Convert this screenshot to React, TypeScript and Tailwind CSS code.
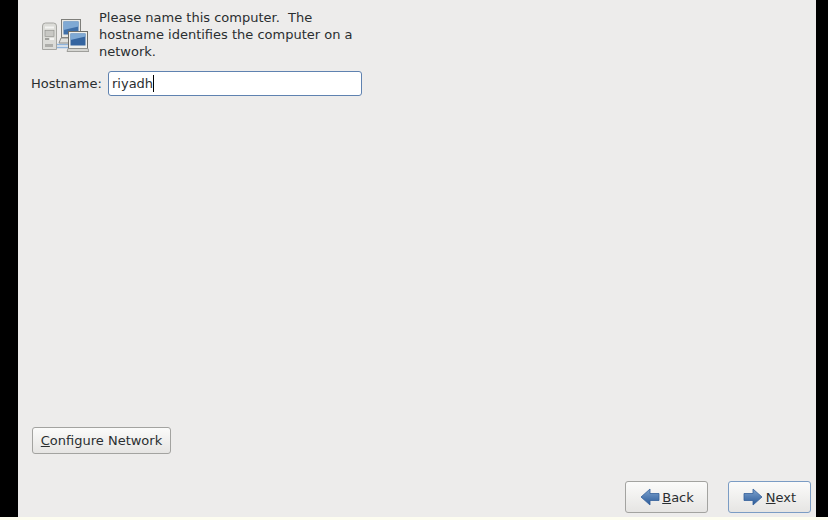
const ui = { fontFamily: '"DejaVu Sans", sans-serif' };

function NetworkIcon() {
  return (
    <svg width="48" height="36" viewBox="0 0 48 36">
      {/* tower */}
      <path d="M1.500 10q0-3 3-3h8q3 0 3 3v23.500h-14z" fill="#dcdcd8" stroke="#a6a6a2" />
      <rect x="4" y="10.500" width="9" height="2" fill="#f4f4f2" />
      <rect x="4" y="14.500" width="9" height="6" fill="#c8c8c4" stroke="#8e8e8a" strokeWidth="0.6" />
      <rect x="4" y="22" width="4" height="2" fill="#a0a09c" />
      <rect x="9" y="22" width="4" height="2" fill="#f4f4f2" />
      <path d="M5 28v3M7 28v3M9 28v3M11 28v3" stroke="#80807c" />
      {/* cables */}
      <path d="M16 28.500h13M16 31.500h13" stroke="#8fb4dc" strokeWidth="1.300" />
      {/* back monitor */}
      <rect x="20.500" y="3.500" width="19" height="18" fill="#e9e9e5" stroke="#7e7e7a" />
      <rect x="22.500" y="5.500" width="15" height="13" fill="#3f6fa8" />
      <path d="M22.500 5.500h15v5l-15 3.500z" fill="#7fa9d4" />
      <path d="M18 27l2-5h9v5z" fill="#e0e0dc" stroke="#8e8e8a" />
      {/* front monitor */}
      <rect x="27.500" y="15.500" width="19" height="17" fill="#f0f0ec" stroke="#6e6e6a" />
      <rect x="29.500" y="17.500" width="15" height="12" fill="#3565a0" />
      <path d="M29.500 17.500h15v3l-15 3.500z" fill="#7fa9d4" />
      <path d="M27 32.500h20l1 3H26z" fill="#d6d6d2" stroke="#8e8e8a" strokeWidth="0.8" />
    </svg>
  );
}

function ArrowIcon({ flip }: { flip?: boolean }) {
  const id = flip ? "arrow-b" : "arrow-n";
  return (
    <svg width="20" height="18" viewBox="0 0 20 18" className={flip ? "-scale-x-100" : ""}>
      <defs>
        <linearGradient id={id} x1="0" y1="0" x2="0" y2="1">
          <stop offset="0" stopColor="#7ea3cf" />
          <stop offset="1" stopColor="#2a5a98" />
        </linearGradient>
      </defs>
      <path
        d="M1 5.500h9V1l9 8-9 8v-4.500H1z"
        fill={`url(#${id})`}
        stroke="#34609a"
        strokeWidth="0.8"
        strokeLinejoin="round"
      />
    </svg>
  );
}

function Button({
  focused,
  className,
  children,
}: {
  focused?: boolean;
  className: string;
  children: React.ReactNode;
}) {
  return (
    <button
      className={`flex items-center justify-center rounded-[3px] border bg-gradient-to-b from-[#fbfbfa] to-[#e6e5e3] text-[#2a2e30] ${
        focused ? "border-[#7b9cc4]" : "border-[#a3a3a0]"
      } ${className}`}
    >
      {children}
    </button>
  );
}

export default function App() {
  return (
    <div className="flex h-[520px] w-[828px] flex-col bg-black" style={ui}>
      <div className="flex h-[517px] shrink-0">
        <div className="ml-[18px] flex h-[517px] w-[798px] flex-col bg-[#edeceb] text-[13px] leading-[17px] text-[#2a2e30]">
          <div className="flex pl-[23px] pt-[9px]">
            <div className="mt-[7px]">
              <NetworkIcon />
            </div>
            <p className="ml-[10px] w-[262px]">
              Please name this computer.&nbsp; The hostname identifies the computer on a network.
            </p>
          </div>

          <div className="ml-[13px] mt-[11px] flex items-center">
            <span className="w-[72px]">Hostname:</span>
            <div className="ml-[5px] flex h-[25px] w-[254px] items-center rounded-[3px] border border-[#5f82b0] bg-white pl-[3px]">
              riyadh
              <span className="h-[17px] w-px bg-black" />
            </div>
          </div>

          <div className="ml-[14px] mt-[331px]">
            <Button className="h-[27px] w-[139px]">
              <span>
                <span className="underline">C</span>onfigure Network
              </span>
            </Button>
          </div>

          <div className="mr-[5px] mt-[27px] flex justify-end gap-[20px]">
            <Button className="h-[32px] w-[83px] gap-[2px] pl-[1px]">
              <ArrowIcon flip />
              <span>
                <span className="underline">B</span>ack
              </span>
            </Button>
            <Button focused className="h-[32px] w-[83px] gap-[3px]">
              <ArrowIcon />
              <span>
                <span className="underline">N</span>ext
              </span>
            </Button>
          </div>
        </div>
      </div>
      <div className="h-[3px] bg-[#fdfdf0]" />
    </div>
  );
}
